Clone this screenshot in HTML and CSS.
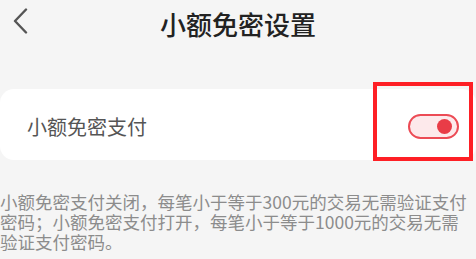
FILE: index.html
```html
<!DOCTYPE html>
<html lang="zh">
<head>
<meta charset="utf-8">
<link rel="stylesheet" href="styles.css">
</head>
<body>
<div class="page">
  <header class="nav">
    <svg class="back" viewBox="0 0 16 26" width="16" height="26"><path d="M14 1.5 L3 13 L14 24.5" fill="none" stroke="#555" stroke-width="2.4" stroke-linecap="round" stroke-linejoin="round"/></svg>
    <h1 class="title">小额免密设置</h1>
  </header>
  <section class="card">
    <span class="label">小额免密支付</span>
    <span class="toggle"><span class="knob"></span></span>
  </section>
  <p class="desc">小额免密支付关闭，每笔小于等于300元的交易无需验证支付密码；小额免密支付打开，每笔小于等于1000元的交易无需验证支付密码。</p>
  <div class="highlight"></div>
</div>
</body>
</html>
```
FILE: styles.css
```css
html, body {
  margin: 0;
  padding: 0;
  background: #f5f5f5;
}
.page {
  position: relative;
  width: 476px;
  height: 259px;
  overflow: hidden;
  font-family: "Noto Sans CJK SC", "Noto Sans", sans-serif;
}
.nav {
  position: relative;
  height: 47px;
  display: flex;
  align-items: center;
  justify-content: center;
}
.back {
  position: absolute;
  left: 12px;
  top: 8px;
}
.title {
  margin: 0;
  font-size: 26px;
  font-weight: 500;
  color: #222;
  line-height: 47px;
}
.card {
  margin: 42px 0 0 0;
  height: 71px;
  background: #fff;
  border-radius: 14px;
  display: flex;
  align-items: center;
  justify-content: space-between;
  padding: 0 17px 0 27px;
}
.label {
  font-size: 20px;
  color: #555;
  line-height: 1;
  margin-top: 4px;
}
.toggle {
  box-sizing: border-box;
  width: 51px;
  height: 25px;
  border: 2px solid #ec4b55;
  background: #fde9eb;
  border-radius: 13px;
  display: flex;
  align-items: center;
  justify-content: flex-end;
  padding-right: 5px;
  margin-top: 4px;
}
.knob {
  width: 15px;
  height: 15px;
  border-radius: 50%;
  background: #e93c47;
}
.desc {
  margin: 32px 0 0 0;
  font-size: 17.5px;
  line-height: 20px;
  color: #8c8c8c;
  width: 476px;
}
.highlight {
  position: absolute;
  left: 373px;
  top: 82px;
  width: 100px;
  height: 79px;
  box-sizing: border-box;
  border: 4px solid #fe1f25;
}
```
